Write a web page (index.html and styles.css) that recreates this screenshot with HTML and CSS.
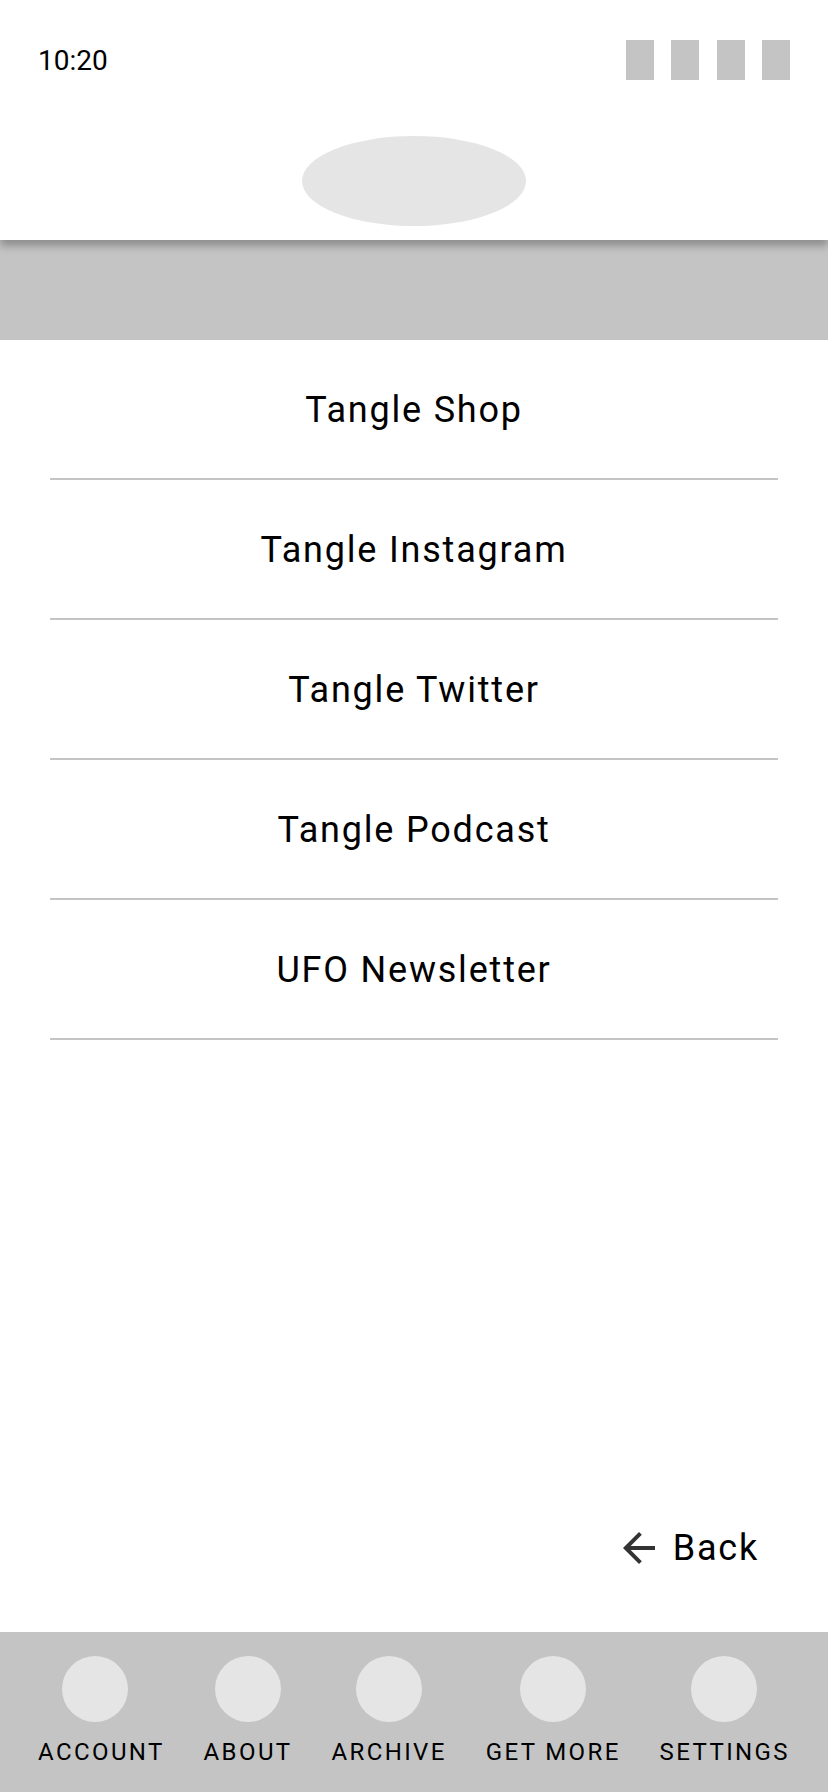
FILE: index.html
```html
<!DOCTYPE html>
<html>
<head>
    <title>Tangle</title>
    <meta charset="UTF-8">
    <link rel="stylesheet" href="styles.css">
</head>
<body>
    <div class="app">
        <div class="header">
            <div class="status-bar">
                <span class="time">10:20</span>
                <div class="status-icons">
                    <div class="status-icon"></div>
                    <div class="status-icon"></div>
                    <div class="status-icon"></div>
                    <div class="status-icon"></div>
                </div>
            </div>
            <div class="logo"></div>
        </div>
        <div class="banner"></div>
        <div class="content">
            <div class="link-list">
                <div class="link-row">Tangle Shop</div>
                <div class="link-row">Tangle Instagram</div>
                <div class="link-row">Tangle Twitter</div>
                <div class="link-row">Tangle Podcast</div>
                <div class="link-row">UFO Newsletter</div>
            </div>
            <div class="back-button">
                <svg viewBox="0 0 24 24">
                    <path d="M20 11H7.83l5.59-5.59L12 4l-8 8 8 8 1.41-1.41L7.83 13H20v-2z"/>
                </svg>
                <span>Back</span>
            </div>
        </div>
        <div class="tab-bar">
            <div class="tab tab-account"><div class="tab-icon"></div><span>ACCOUNT</span></div>
            <div class="tab"><div class="tab-icon"></div><span>ABOUT</span></div>
            <div class="tab"><div class="tab-icon"></div><span>ARCHIVE</span></div>
            <div class="tab"><div class="tab-icon"></div><span>GET MORE</span></div>
            <div class="tab"><div class="tab-icon"></div><span>SETTINGS</span></div>
        </div>
    </div>
</body>
</html>
```
FILE: styles.css
```css
* {
    box-sizing: border-box;
}
body {
    margin: 0;
    font-family: Roboto, Arial, sans-serif;
    color: #000;
    background: #fff;
}
.app {
    display: flex;
    flex-direction: column;
    height: 100vh;
}
.header {
    position: relative;
    height: 240px;
    padding-top: 40px;
    background: #fff;
    box-shadow: 0 6px 8px rgba(0, 0, 0, 0.28);
}
.status-bar {
    display: flex;
    justify-content: space-between;
    align-items: center;
    height: 40px;
    padding: 0 38px;
}
.time {
    font-size: 28px;
}
.status-icons {
    display: flex;
    justify-content: space-between;
    width: 164px;
}
.status-icon {
    width: 28px;
    height: 40px;
    background: #c4c4c4;
}
.logo {
    width: 224px;
    height: 90px;
    margin: 56px auto 0;
    border-radius: 50%;
    background: #e5e5e5;
}
.banner {
    height: 100px;
    background: #c4c4c4;
}
.content {
    flex-grow: 1;
    display: flex;
    flex-direction: column;
}
.link-list {
    padding: 0 50px;
}
.link-row {
    display: flex;
    align-items: center;
    justify-content: center;
    height: 140px;
    padding-top: 2px;
    border-bottom: 2px solid #c4c4c4;
    font-size: 36px;
    letter-spacing: 1.8px;
}
.back-button {
    display: flex;
    align-items: center;
    justify-content: flex-end;
    gap: 10px;
    margin-top: auto;
    padding: 0 69px 60px 0;
    font-size: 36px;
    letter-spacing: 1.8px;
}
.back-button svg {
    width: 48px;
    height: 48px;
    fill: #333;
}
.tab-bar {
    display: flex;
    justify-content: space-between;
    height: 160px;
    padding: 24px 38px 0;
    background: #c4c4c4;
}
.tab {
    display: flex;
    flex-direction: column;
    align-items: center;
    gap: 16px;
    font-size: 24px;
    letter-spacing: 2.4px;
}
.tab-icon {
    width: 66px;
    height: 66px;
    margin-right: 1px;
    border-radius: 50%;
    background: #e5e5e5;
}
.tab-account .tab-icon {
    margin-right: 12px;
}
```
